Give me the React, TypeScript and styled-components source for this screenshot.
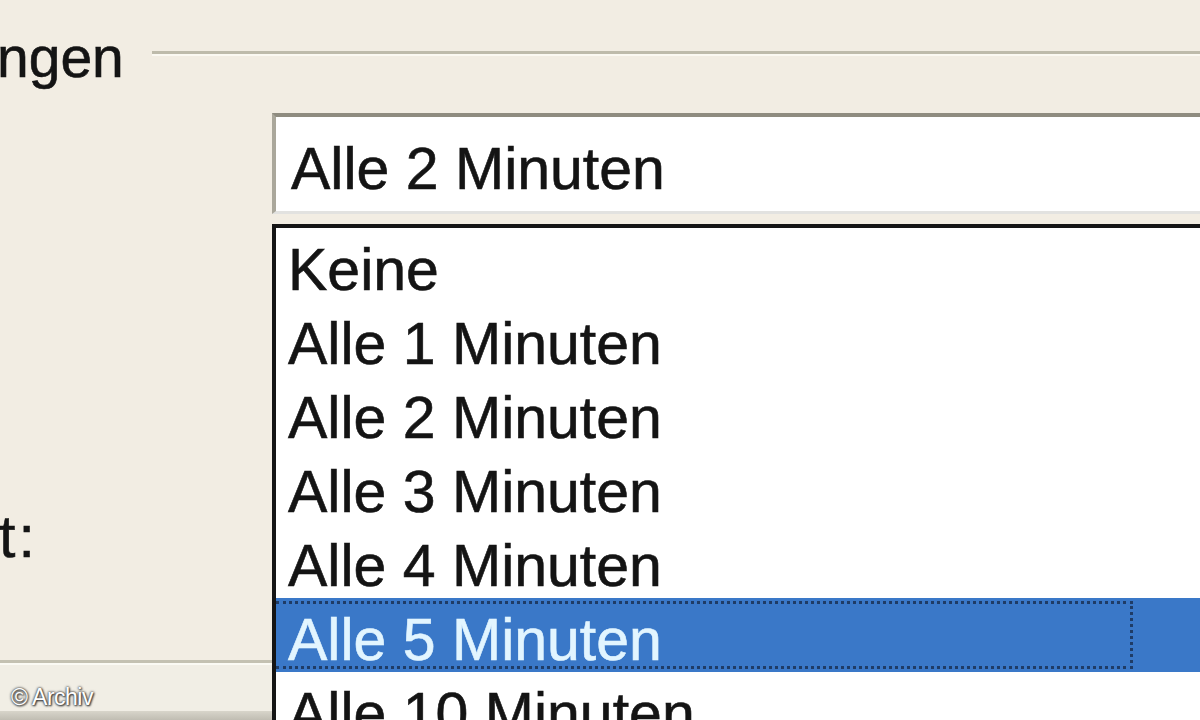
import styled, { createGlobalStyle } from "styled-components";

const GlobalStyle = createGlobalStyle`
  html, body {
    margin: 0;
    padding: 0;
    background: #f2ede3;
  }
`;

const Page = styled.div`
  width: 1200px;
  height: 720px;
  overflow: hidden;
  background: #f2ede3;
  font-family: "Liberation Sans", Arial, sans-serif;
  font-size: 59px;
  color: #141414;
  -webkit-text-stroke: 0.6px currentColor;
`;

const GroupHeader = styled.div`
  display: flex;
  align-items: flex-start;
  padding-top: 28px;
  height: 58px;
`;

const GroupTitle = styled.span`
  line-height: 58px;
  margin-left: -3px;
  font-size: 57px;
`;

const GroupRule = styled.div`
  flex: 1;
  margin-top: 23px;
  margin-left: 28px;
  border-top: 3px solid #bebbab;
  border-bottom: 2px solid #fbf9f2;
`;

const Body = styled.div`
  display: grid;
  grid-template-columns: 272px 1fr;
`;

const LabelColumn = styled.div`
  display: flex;
  flex-direction: column;
`;

const FieldLabel = styled.div`
  margin-top: 422px;
  line-height: 58px;
  margin-left: -1px;
  letter-spacing: 3px;
`;

const GroupBottom = styled.div`
  margin-top: 94px;
  border-top: 3px solid #c4c1b2;
  border-bottom: 2px solid #fbfaf4;
`;

const Footer = styled.div`
  background: #f1eee5;
  padding: 21px 0 0 11px;
  height: 25px;
`;

const Watermark = styled.span`
  display: block;
  font-size: 23px;
  line-height: 23px;
  letter-spacing: -0.5px;
  color: #ffffff;
  -webkit-text-stroke: 0;
  text-shadow: 0 0 2px #3c3c3c, 0 0 3px #5a5a5a, 1px 1px 2px #2a2a2a;
`;

const DialogEdge = styled.div`
  height: 14px;
  background: linear-gradient(#d8d5ca, #b3b0a6);
`;

const FieldColumn = styled.div`
  display: flex;
  flex-direction: column;
  padding-top: 27px;
`;

const ComboBox = styled.div`
  background: #ffffff;
  border-top: 4px solid #8f8c80;
  border-left: 4px solid #aaa79b;
  border-bottom: 3px solid #e2e2e0;
  padding: 23px 0 12px 15px;
  line-height: 59px;
  white-space: nowrap;
`;

const DropList = styled.ul`
  list-style: none;
  margin: 10px 0 0;
  padding: 0;
  background: #ffffff;
  border-top: 4px solid #151515;
  border-left: 4px solid #151515;
`;

const Option = styled.li<{ $selected?: boolean }>`
  position: relative;
  height: 74px;
  box-sizing: border-box;
  padding: 13px 0 0 12px;
  line-height: 59px;
  white-space: nowrap;
  background: ${(p) => (p.$selected ? "#3a78c8" : "transparent")};
  color: ${(p) => (p.$selected ? "#e2f5ff" : "#141414")};

  ${(p) =>
    p.$selected &&
    `
    &::after {
      content: "";
      position: absolute;
      left: 0;
      top: 3px;
      bottom: 3px;
      width: 854px;
      border: 3px dotted #1f3c66;
      border-left: none;
    }
  `}
`;

const options = [
  "Keine",
  "Alle 1 Minuten",
  "Alle 2 Minuten",
  "Alle 3 Minuten",
  "Alle 4 Minuten",
  "Alle 5 Minuten",
  "Alle 10 Minuten",
];

export default function App() {
  const selected = "Alle 5 Minuten";

  return (
    <Page>
      <GlobalStyle />
      <GroupHeader>
        <GroupTitle>ngen</GroupTitle>
        <GroupRule />
      </GroupHeader>
      <Body>
        <LabelColumn>
          <FieldLabel>t:</FieldLabel>
          <GroupBottom />
          <Footer>
            <Watermark>© Archiv</Watermark>
          </Footer>
          <DialogEdge />
        </LabelColumn>
        <FieldColumn>
          <ComboBox>Alle 2 Minuten</ComboBox>
          <DropList role="listbox">
            {options.map((o) => (
              <Option key={o} role="option" $selected={o === selected}>
                {o}
              </Option>
            ))}
          </DropList>
        </FieldColumn>
      </Body>
    </Page>
  );
}
